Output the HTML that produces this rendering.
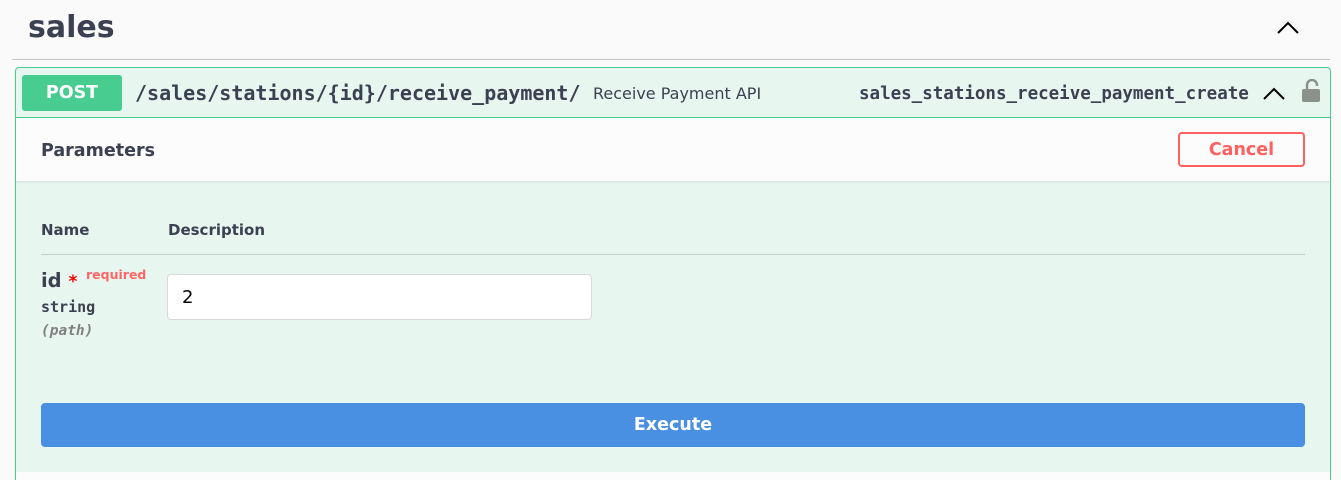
<!DOCTYPE html>
<html style="width:1341px;height:480px;overflow:hidden"><head><meta charset="utf-8"><style>
*{box-sizing:border-box;margin:0;padding:0}
body{width:1341px;height:480px;overflow:hidden;background:#fafafa;font-family:"DejaVu Sans","Liberation Sans",sans-serif;color:#3b4151;position:relative}
.abs{position:absolute;white-space:nowrap}
.mono{font-family:"DejaVu Sans Mono","Liberation Mono",monospace}
</style></head><body>
<div class="abs" style="left:28px;top:8px;font-size:30px;font-weight:bold;line-height:40px">sales</div>
<svg class="abs" style="left:1276px;top:20px" width="24" height="16" viewBox="0 0 24 16"><path d="M2 13 L12 3 L22 13" fill="none" stroke="#000" stroke-width="2"/></svg>
<div class="abs" style="left:12px;top:59px;width:1318px;height:1px;background:#c8c8c8"></div>
<div class="abs" style="left:15px;top:67px;width:1316px;height:413px;border:1px solid #49cc90;border-bottom:none;border-radius:4px 4px 0 0;background:#e8f6f0"></div>
<div class="abs" style="left:16px;top:117px;width:1314px;height:1px;background:#49cc90"></div>
<div class="abs" style="left:22px;top:75px;width:100px;height:36px;background:#49cc90;border-radius:3px;color:#fff;font-weight:bold;font-size:17.5px;line-height:36px;text-align:center">POST</div>
<div class="abs mono" style="left:135px;top:80px;font-size:20px;font-weight:bold;line-height:26px;color:#3b4151">/sales/stations/{id}/receive_payment/</div>
<div class="abs" style="left:593px;top:84px;font-size:16px;line-height:20px;color:#3b4151">Receive Payment API</div>
<div class="abs mono" style="left:859px;top:83px;font-size:17.5px;font-weight:bold;line-height:22px;color:#3b4151">sales_stations_receive_payment_create</div>
<svg class="abs" style="left:1262px;top:85px" width="24" height="16" viewBox="0 0 24 16"><path d="M2 14 L12 4 L22 14" fill="none" stroke="#000" stroke-width="2"/></svg>
<svg class="abs" style="left:1301px;top:79px" width="20" height="24" viewBox="0 0 20 24"><path d="M6 10 V6 A5 5 0 0 1 16 6 V7" fill="none" stroke="#8b918b" stroke-width="2.5"/><rect x="1" y="10" width="18" height="13" rx="2" fill="#8b918b"/></svg>
<div class="abs" style="left:16px;top:118px;width:1314px;height:63px;background:#fcfcfc;box-shadow:0 1px 2px rgba(0,0,0,.1)"></div>
<div class="abs" style="left:41px;top:139px;font-size:17.5px;font-weight:bold;line-height:24px">Parameters</div>
<div class="abs" style="left:1178px;top:132px;width:127px;height:35px;border:2px solid #ff6060;border-radius:4px;color:#ff6060;font-weight:bold;font-size:17.5px;line-height:33px;text-align:center">Cancel</div>
<div class="abs" style="left:41px;top:220px;font-size:15px;font-weight:bold;line-height:20px">Name</div>
<div class="abs" style="left:168px;top:220px;font-size:15px;font-weight:bold;line-height:20px">Description</div>
<div class="abs" style="left:41px;top:254px;width:1264px;height:1px;background:#c5cfcc"></div>
<div class="abs" style="left:41px;top:268px;font-size:19.5px;font-weight:bold;line-height:26px">id <span style="color:red;font-size:17px">*</span></div>
<div class="abs" style="left:86px;top:267px;font-size:12.5px;font-weight:bold;color:#f66;line-height:16px">required</div>
<div class="abs mono" style="left:41px;top:297px;font-size:15px;font-weight:bold;line-height:20px">string</div>
<div class="abs mono" style="left:41px;top:322px;font-size:14.5px;font-style:italic;font-weight:bold;color:#808080;line-height:18px">(path)</div>
<div class="abs" style="left:167px;top:274px;width:425px;height:46px;background:#fff;border:1px solid #d9d9d9;border-radius:4px;font-size:18px;line-height:46px;padding-left:14px;color:#000">2</div>
<div class="abs" style="left:41px;top:403px;width:1264px;height:44px;background:#4990e2;border-radius:4px;color:#fff;font-weight:bold;font-size:17.5px;line-height:44px;text-align:center">Execute</div>
<div class="abs" style="left:16px;top:472px;width:1314px;height:8px;background:#fcfcfc"></div>
</body></html>
